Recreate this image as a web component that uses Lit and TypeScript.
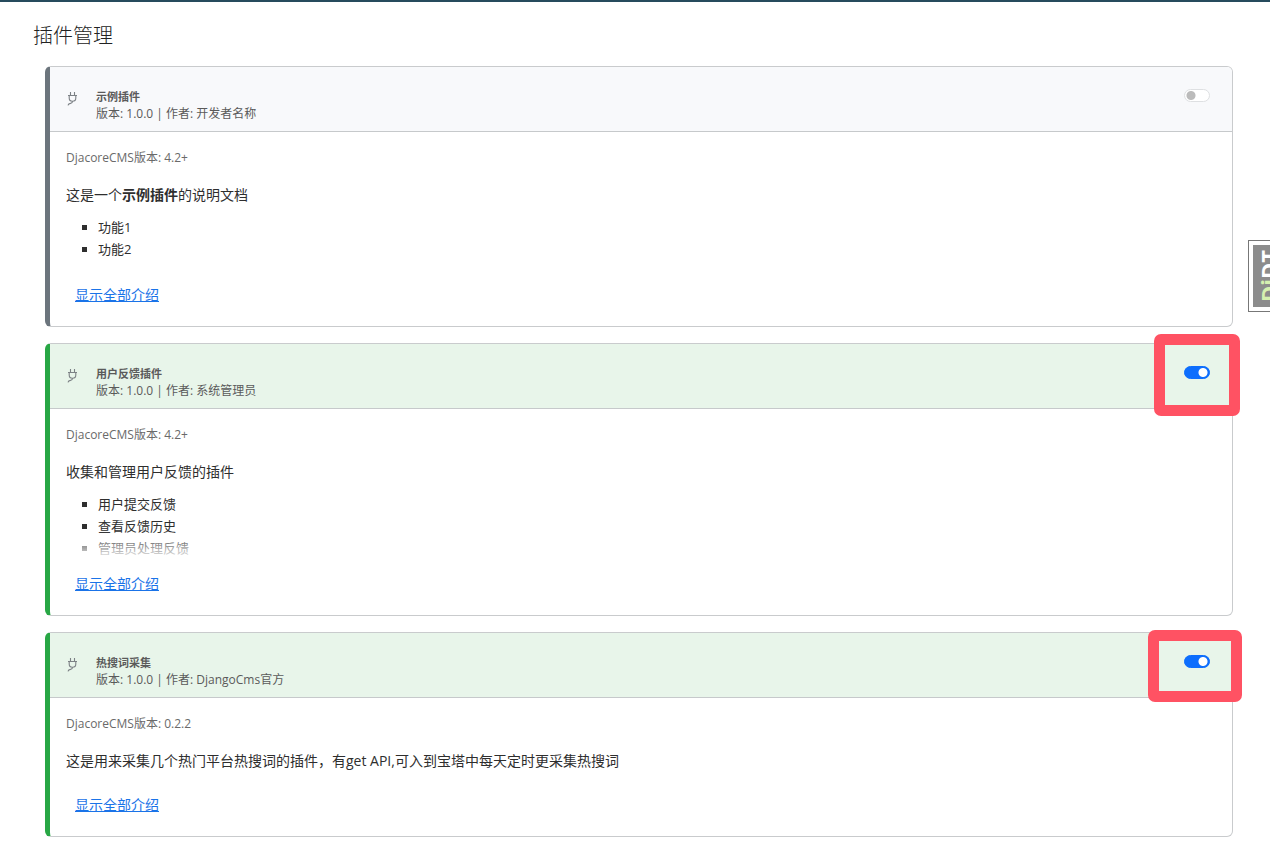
import { LitElement, html, css, nothing } from "lit";
import { customElement, property, state } from "lit/decorators.js";
import { classMap } from "lit/directives/class-map.js";

interface Plugin {
  id: string;
  name: string;
  version: string;
  author: string;
  cms: string;
  intro: unknown;
  features: string[];
  enabled: boolean;
  marker?: "tall" | "wide";
}

const PLUGINS: Plugin[] = [
  {
    id: "example",
    name: "示例插件",
    version: "1.0.0",
    author: "开发者名称",
    cms: "4.2+",
    intro: html`这是一个<strong>示例插件</strong>的说明文档`,
    features: ["功能1", "功能2"],
    enabled: false,
  },
  {
    id: "feedback",
    name: "用户反馈插件",
    version: "1.0.0",
    author: "系统管理员",
    cms: "4.2+",
    intro: "收集和管理用户反馈的插件",
    features: ["用户提交反馈", "查看反馈历史", "管理员处理反馈"],
    enabled: true,
    marker: "tall",
  },
  {
    id: "hotwords",
    name: "热搜词采集",
    version: "1.0.0",
    author: "DjangoCms官方",
    cms: "0.2.2",
    intro: "这是用来采集几个热门平台热搜词的插件，有get API,可入到宝塔中每天定时更采集热搜词",
    features: [],
    enabled: true,
    marker: "wide",
  },
];

@customElement("plugin-card")
class PluginCard extends LitElement {
  @property({ attribute: false }) plugin!: Plugin;
  @state() private enabled = false;
  @state() private expanded = false;

  static styles = css`
    :host {
      display: block;
    }
    .card {
      border: 1px solid #c9cbcd;
      border-left: 5px solid #6c757d;
      border-radius: 6px;
      background: #fff;
    }
    .card.on {
      border-left-color: #28a745;
    }
    .head {
      position: relative;
      display: flex;
      align-items: flex-start;
      padding: 21px 22px 8px 16px;
      border-bottom: 1px solid #c6c9cb;
      border-radius: 0 5px 0 0;
      background: #f8f9fb;
    }
    .on .head {
      background: #e8f5ea;
    }
    .plug {
      flex: none;
      width: 14px;
      height: 16px;
      margin: 3px 16px 0 0;
      color: #7c8185;
    }
    .titles {
      flex: 1;
      color: #5a5a5a;
    }
    .name {
      margin: 0;
      font-size: 11px;
      line-height: 17px;
      font-weight: 700;
    }
    .meta {
      margin: 0;
      font-size: 12px;
      line-height: 18px;
    }
    .switch {
      appearance: none;
      flex: none;
      width: 26px;
      height: 13px;
      margin: 1px 0 0;
      border: 1px solid #dee0e2;
      border-radius: 7px;
      background: #fff radial-gradient(circle at 6px 50%, #bbb 4px, transparent 5px);
      cursor: pointer;
    }
    .switch:checked {
      border-color: #0d6efd;
      background: #0d6efd radial-gradient(circle at 18px 50%, #fff 4px, transparent 5px);
    }
    .marker {
      position: absolute;
      box-sizing: border-box;
      border: 11px solid #ff5263;
      border-radius: 7px;
      pointer-events: none;
    }
    .marker.tall {
      top: -10px;
      right: -8px;
      width: 86px;
      height: 82px;
    }
    .marker.wide {
      top: -3px;
      right: -10px;
      width: 94px;
      height: 72px;
    }
    .body {
      padding: 16px 16px 20px;
    }
    .cms {
      margin: 0 0 14px;
      font-size: 12px;
      line-height: 20px;
      color: #6a6a6a;
    }
    .intro {
      position: relative;
      max-height: 102px;
      overflow: hidden;
      color: #2e2e2e;
    }
    .intro.open {
      max-height: none;
    }
    .intro.cut:not(.open)::after {
      content: "";
      position: absolute;
      inset: auto 0 0 0;
      height: 30px;
      background: linear-gradient(transparent, #fff);
    }
    .text {
      margin: 0 0 8px;
      font-size: 14px;
      line-height: 26px;
    }
    .features {
      margin: 0 0 12px;
      padding-left: 32px;
      list-style: square;
      font-size: 13px;
      line-height: 22px;
    }
    .more {
      display: block;
      margin: 12px 0 0;
      padding: 0 9px;
      border: 0;
      background: none;
      font: inherit;
      font-size: 14px;
      line-height: 22px;
      color: #1a73e8;
      text-decoration: underline;
      cursor: pointer;
    }
  `;

  willUpdate(changed: Map<string, unknown>) {
    if (changed.has("plugin")) this.enabled = this.plugin.enabled;
  }

  render() {
    const p = this.plugin;
    return html`
      <article class=${classMap({ card: true, on: this.enabled })}>
        <header class="head">
          <svg class="plug" viewBox="0 0 14 16" fill="none" stroke="currentColor" stroke-width="1.1" aria-hidden="true">
            <path d="M4.500 1v3M8.500 1v3M2 4.500h9M3.200 4.500v2.500a3.300 3.300 0 0 0 6.600 0V4.500M6.700 10.300c-.2 1.500-.8 1.900-2.200 2.100-1.400.1-2.200.5-2.500 1.900" />
          </svg>
          <div class="titles">
            <h2 class="name"><label for=${p.id}>${p.name}</label></h2>
            <p class="meta">版本: ${p.version} | 作者: ${p.author}</p>
          </div>
          <input
            class="switch"
            type="checkbox"
            role="switch"
            id=${p.id}
            .checked=${this.enabled}
            @change=${(e: Event) => (this.enabled = (e.target as HTMLInputElement).checked)}
          />
          ${p.marker ? html`<span class="marker ${p.marker}"></span>` : nothing}
        </header>
        <div class="body">
          <p class="cms">DjacoreCMS版本: ${p.cms}</p>
          <div class=${classMap({ intro: true, open: this.expanded, cut: p.features.length > 2 })}>
            <p class="text">${p.intro}</p>
            ${p.features.length
              ? html`<ul class="features">${p.features.map((f) => html`<li>${f}</li>`)}</ul>`
              : nothing}
          </div>
          <button class="more" type="button" @click=${() => (this.expanded = !this.expanded)}>显示全部介绍</button>
        </div>
      </article>
    `;
  }
}

@customElement("app-root")
class AppRoot extends LitElement {
  static styles = css`
    :host {
      display: block;
      min-height: 100vh;
      box-sizing: border-box;
      border-top: 2px solid #264b5d;
      background: #fff;
      font-family: "Open Sans", "Noto Sans CJK SC", sans-serif;
    }
    .page {
      padding: 19px 37px 25px 33px;
    }
    .title {
      margin: 0 0 15px;
      font-size: 20px;
      line-height: 30px;
      font-weight: 300;
      color: #222;
    }
    .list {
      display: grid;
      gap: 16px;
      padding-left: 12px;
    }
    .handle {
      position: fixed;
      top: 240px;
      right: -18px;
      box-sizing: border-box;
      width: 40px;
      height: 72px;
      padding: 4px;
      border: 1px solid #777;
      background: #fff;
      text-decoration: none;
    }
    .badge {
      display: flex;
      align-items: center;
      justify-content: center;
      height: 62px;
      background: #8c8c8c;
      writing-mode: vertical-rl;
      transform: rotate(180deg);
      font-size: 22px;
      line-height: 30px;
      font-weight: 700;
      color: #fff;
    }
    .green {
      color: #d5f0b0;
    }
  `;

  render() {
    return html`
      <main class="page">
        <h1 class="title">插件管理</h1>
        <div class="list">${PLUGINS.map((p) => html`<plugin-card .plugin=${p}></plugin-card>`)}</div>
      </main>
      <a class="handle" href="#"><span class="badge"><span><span class="green">Dj</span>DT</span></span></a>
    `;
  }
}
